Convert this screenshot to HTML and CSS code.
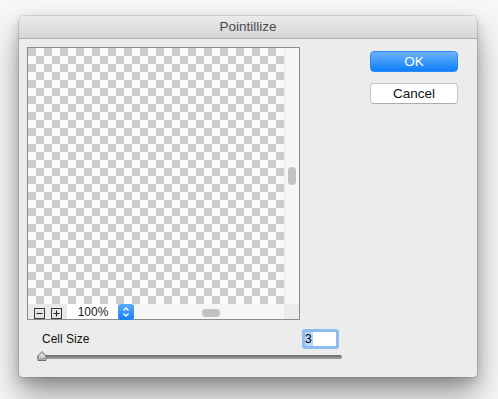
FILE: index.html
```html
<!DOCTYPE html>
<html>
<head>
<meta charset="utf-8">
<link rel="stylesheet" href="styles.css">
</head>
<body>
<div class="window">
  <div class="titlebar">Pointillize</div>
  <div class="main">
    <div class="preview">
      <div class="preview-top">
        <div class="checker"></div>
        <div class="vscroll"><div class="vthumb"></div></div>
      </div>
      <div class="preview-bar">
        <div class="zoombtn"><svg width="11" height="11" viewBox="0 0 11 11"><rect x="0.5" y="0.5" width="10" height="10" fill="#e4e4e4" stroke="#3a3a3a"/><path d="M2.5 5.5h6" stroke="#222" stroke-width="1"/></svg></div>
        <div class="zoombtn"><svg width="11" height="11" viewBox="0 0 11 11"><rect x="0.5" y="0.5" width="10" height="10" fill="#e4e4e4" stroke="#3a3a3a"/><path d="M2.5 5.5h6M5.5 2.5v6" stroke="#222" stroke-width="1"/></svg></div>
        <div class="zoomfield">100%</div>
        <div class="stepper"><svg width="16" height="16" viewBox="0 0 16 16"><path d="M5.5 6.5L8 4l2.5 2.5M5.5 9.5L8 12l2.5-2.5" fill="none" stroke="#fff" stroke-width="1.3"/></svg></div>
        <div class="hscroll"><div class="hthumb"></div></div>
        <div class="corner"></div>
      </div>
    </div>
    <div class="buttons">
      <div class="btn btn-ok">OK</div>
      <div class="btn btn-cancel">Cancel</div>
    </div>
  </div>
  <div class="params">
    <div class="param-row">
      <span class="param-label">Cell Size</span>
      <div class="param-input"><span class="sel">3</span></div>
    </div>
    <div class="slider">
      <div class="track"></div>
      <svg class="thumb" width="10" height="11" viewBox="0 0 10 11"><path d="M1 10.5V6L5 1.5 9 6v4.5z" fill="#d8d8d8" stroke="#6e6e6e" stroke-width="1"/><path d="M1.5 7.5h7v2.5h-7z" fill="#a9a9a9"/></svg>
    </div>
  </div>
</div>
</body>
</html>
```
FILE: styles.css
```css
html, body {
  margin: 0;
  padding: 0;
}
body {
  width: 498px;
  height: 399px;
  overflow: hidden;
  background: #f7f7f7;
  padding: 16px 0 0 19px;
  box-sizing: border-box;
  font-family: "Liberation Sans", Arial, sans-serif;
}
.window {
  width: 458px;
  height: 361px;
  background: #ececec;
  border-radius: 5px 5px 4px 4px;
  box-shadow: 0 0 0 1px rgba(0,0,0,0.1), 0 4px 12px rgba(0,0,0,0.18), 0 18px 32px rgba(0,0,0,0.38);
  display: flex;
  flex-direction: column;
}
.titlebar {
  height: 22px;
  line-height: 22px;
  border-bottom: 1px solid #b1b1b1;
  background: linear-gradient(#ebebeb, #d5d5d5);
  border-radius: 5px 5px 0 0;
  text-align: center;
  font-size: 13.5px;
  color: #4d4d4d;
}
.main {
  display: flex;
  padding: 8px 0 0 8px;
}
.preview {
  width: 271px;
  border: 1px solid #8c8c8c;
  display: flex;
  flex-direction: column;
}
.preview-top {
  display: flex;
  height: 256px;
}
.checker {
  width: 256px;
  height: 256px;
  background-color: #ffffff;
  background-image: conic-gradient(#cccccc 25%, #fbfafb 0 50%, #cccccc 0 75%, #fbfafb 0);
  background-size: 16px 16px;
  background-position: 8px 0;
}
.vscroll {
  width: 15px;
  background: #f6f6f6;
  border-left: 1px solid #ebebeb;
  box-sizing: border-box;
  padding: 119px 0 0 3px;
}
.vthumb {
  width: 8px;
  height: 18px;
  border-radius: 4px;
  background: #c2c2c2;
}
.preview-bar {
  height: 15px;
  display: flex;
  align-items: center;
  background: #e9e9e9;
}
.zoombtn {
  width: 11px;
  height: 11px;
  margin-left: 6px;
  display: flex;
  margin-top: 4px;
}
.zoombtn + .zoombtn {
  margin-left: 6px;
}
.zoomfield {
  margin-left: 5px;
  width: 51px;
  height: 15px;
  background: #fff;
  font-size: 12px;
  line-height: 16px;
  color: #1a1a1a;
  text-align: center;
  box-sizing: border-box;
  padding-left: 1px;
}
.stepper {
  width: 16px;
  height: 16px;
  border-radius: 3px;
  background: linear-gradient(#5aaaf9, #1a7ff5);
  display: flex;
}
.hscroll {
  flex: 1;
  height: 15px;
  background: #f6f6f6;
  box-sizing: border-box;
  padding: 5px 0 0 68px;
}
.hthumb {
  width: 18px;
  height: 8px;
  border-radius: 4px;
  background: #c2c2c2;
}
.corner {
  width: 15px;
  height: 15px;
  background: #ececec;
}
.buttons {
  margin-left: 70px;
  margin-top: 4px;
  display: flex;
  flex-direction: column;
  gap: 11px;
}
.btn {
  width: 88px;
  height: 21px;
  box-sizing: border-box;
  border-radius: 4px;
  font-size: 13.5px;
  text-align: center;
  line-height: 20px;
}
.btn-ok {
  background: linear-gradient(#6cb3fa, #0d7ffb);
  color: #fff;
  border: 1px solid #2a8af5;
}
.btn-cancel {
  background: #fff;
  color: #111;
  border: 1px solid #c6c6c6;
  border-bottom-color: #acacac;
}
.params {
  display: flex;
  flex-direction: column;
  padding-left: 18px;
  margin-top: 9px;
}
.param-row {
  width: 302px;
  display: flex;
  align-items: center;
  padding-left: 5px;
  box-sizing: border-box;
}
.param-label {
  flex: 1;
  font-size: 12px;
  color: #111;
  padding-bottom: 1px;
}
.param-input {
  width: 37px;
  height: 20px;
  box-sizing: border-box;
  border: 3px solid #8fbcef;
  border-radius: 3px;
  background: #fff;
  display: flex;
  align-items: center;
  font-size: 12px;
}
.sel {
  background: #b5d5fc;
  color: #000;
  line-height: 14px;
  padding: 0 1px 0 0;
}
.slider {
  width: 305px;
  height: 11px;
  margin-top: 1px;
  display: flex;
  align-items: flex-end;
  position: relative;
}
.track {
  width: 305px;
  height: 4px;
  margin-bottom: 2px;
  border-radius: 2px;
  background: linear-gradient(#6a6a6a, #a4a4a4);
}
.thumb {
  position: absolute;
  left: 0;
  top: 0;
}
```
